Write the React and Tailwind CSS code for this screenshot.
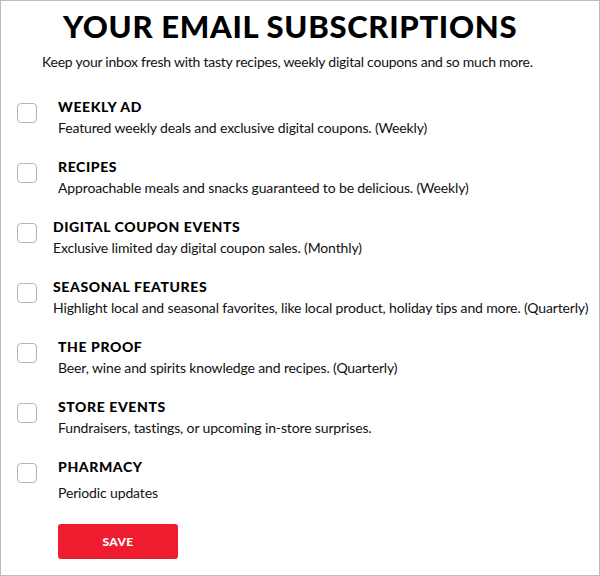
import React from "react";

const items = [
  { t: "WEEKLY AD", d: "Featured weekly deals and exclusive digital coupons. (Weekly)", shift: false },
  { t: "RECIPES", d: "Approachable meals and snacks guaranteed to be delicious. (Weekly)", shift: false },
  { t: "DIGITAL COUPON EVENTS", d: "Exclusive limited day digital coupon sales. (Monthly)", shift: true },
  { t: "SEASONAL FEATURES", d: "Highlight local and seasonal favorites, like local product, holiday tips and more. (Quarterly)", shift: true },
  { t: "THE PROOF", d: "Beer, wine and spirits knowledge and recipes. (Quarterly)", shift: false },
  { t: "STORE EVENTS", d: "Fundraisers, tastings, or upcoming in-store surprises.", shift: false },
];

function Row({ t, d, shift, last }) {
  return (
    <div className="flex items-start h-[60px]">
      <div className="mt-[5px] ml-[16px] w-[20px] h-[20px] shrink-0 rounded-[4px] border border-[#b5b5b5] bg-white" />
      <div className={shift ? "ml-[16px]" : "ml-[21px]"}>
        <div className="text-[14px] leading-[18px] font-black text-black tracking-[0.6px]">{t}</div>
        <div className={(last ? "mt-[8px] " : "mt-[3px] ") + "text-[14px] leading-[18px] text-[#111] tracking-[-0.14px]"}>{d}</div>
      </div>
    </div>
  );
}

export default function App() {
  return (
    <div
      className="w-[600px] h-[576px] border border-[#bdbdbd] bg-white overflow-hidden"
      style={{ fontFamily: "Lato, 'Liberation Sans', sans-serif" }}
    >
      <h1 className="pt-[7px] pl-[62px] text-[31px] leading-[36px] font-black text-black tracking-[0.7px]">
        YOUR EMAIL SUBSCRIPTIONS
      </h1>
      <p className="mt-[9px] pl-[41px] text-[14px] leading-[18px] text-[#111] tracking-[-0.24px]">
        Keep your inbox fresh with tasty recipes, weekly digital coupons and so much more.
      </p>
      <div className="mt-[27px]">
        {items.map((it) => (
          <Row key={it.t} {...it} />
        ))}
        <Row t="PHARMACY" d="Periodic updates" shift={false} last />
      </div>
      <button className="ml-[57px] mt-[6px] w-[120px] h-[35px] rounded-[3px] bg-[#ee1c2e] text-white text-[12px] font-black tracking-[0.4px]">
        SAVE
      </button>
    </div>
  );
}
